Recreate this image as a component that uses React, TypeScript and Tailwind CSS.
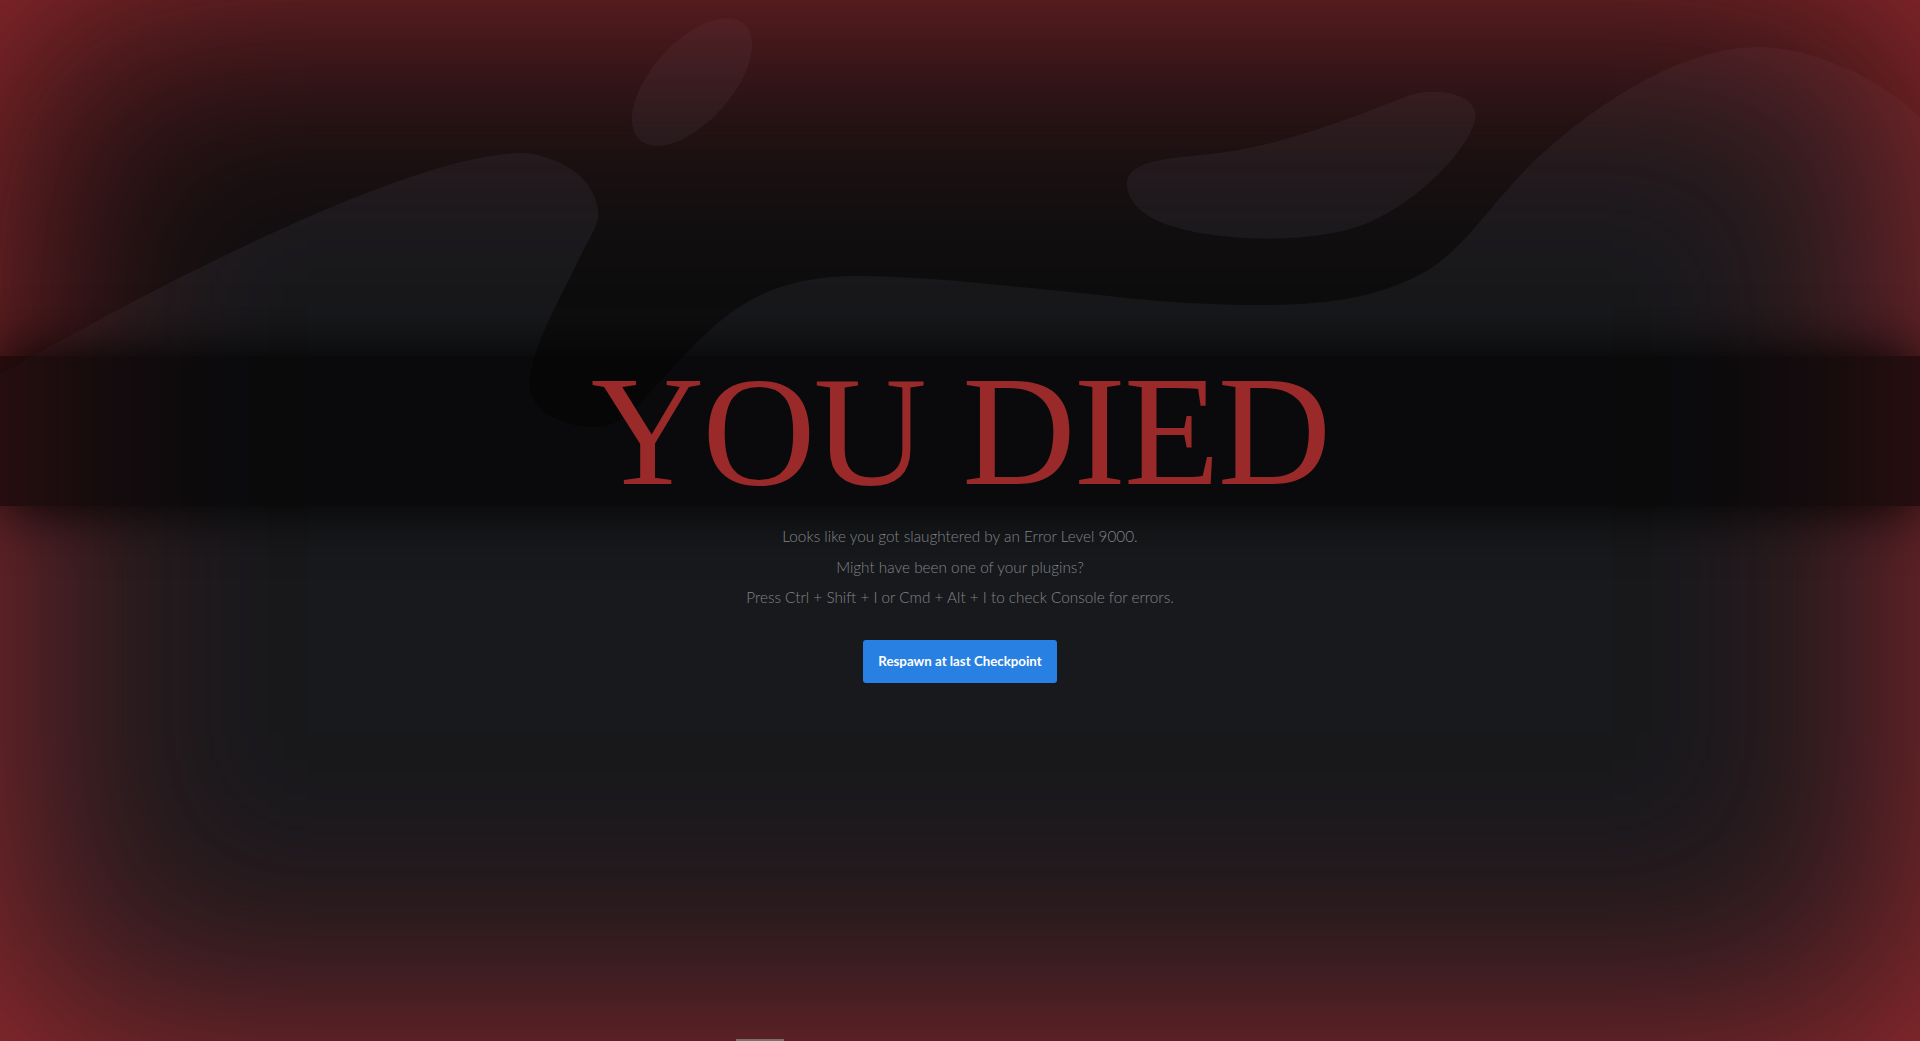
import React from 'react';

const messages = [
  'Looks like you got slaughtered by an Error Level 9000.',
  'Might have been one of your plugins?',
  'Press Ctrl + Shift + I or Cmd + Alt + I to check Console for errors.',
];

const Backdrop: React.FC = () => (
  <svg
    className="absolute inset-0 h-full w-full"
    viewBox="0 0 1920 1041"
    preserveAspectRatio="none"
  >
    <rect x="0" y="0" width="1920" height="1041" fill="#18191c" />
    {/* dark upper area, with the tongue dipping between the two big shapes */}
    <path
      fill="#0e0e0f"
      d="M0 0 H1920 V117
         C1870 70 1800 45 1753 47
         C1680 50 1600 100 1533 162
         C1490 205 1470 240 1433 267
         C1380 300 1320 306 1243 305
         C1190 304 1140 300 1100 295
         C1000 285 920 276 857 276
         C790 276 750 295 713 327
         C680 357 650 395 630 413
         C618 422 608 428 590 427
         C560 425 525 410 530 377
         C535 340 565 290 580 257
         C592 232 600 225 598 210
         C596 190 580 168 547 158
         C537 154 530 153 520 153
         C420 155 200 260 0 375 Z"
    />
    <ellipse cx="692" cy="82" rx="78" ry="40" fill="#18191c" transform="rotate(-48 692 82)" />
    <path
      fill="#18191c"
      d="M1127 187 C1125 165 1150 160 1200 155 C1280 148 1350 118 1410 95
         C1450 85 1480 100 1475 120 C1468 150 1420 200 1370 222
         C1320 245 1210 243 1160 222 C1140 213 1128 200 1127 187 Z"
    />
  </svg>
);

const App: React.FC = () => {
  return (
    <div className="relative h-[1041px] w-full overflow-hidden bg-[#18191c]">
      <Backdrop />
      <div className="absolute inset-0 shadow-[inset_0_0_300px_#9e2a2f]" />

      <div className="relative flex flex-col items-center pt-[356px]">
        <div className="flex h-[150px] w-full items-center justify-center bg-black/[0.57] shadow-[0_0_60px_#000]">
          <h1 className="font-['Liberation_Serif',serif] text-[157px] font-normal leading-none tracking-[-2px] text-[#9a2a2a]">
            YOU DIED
          </h1>
        </div>

        <div className="mt-[20px] flex flex-col items-center gap-[10.5px] font-['Lato',sans-serif] text-[15.3px] font-light leading-5 text-[#80848b]">
          {messages.map((line) => (
            <p key={line}>{line}</p>
          ))}
        </div>

        <button className="mt-[33px] h-[43px] w-[194px] rounded-[3px] bg-[#2880e3] font-['Lato',sans-serif] text-[13.3px] font-bold text-white">
          Respawn at last Checkpoint
        </button>
      </div>

      <div className="absolute bottom-0 left-[736px] h-[2px] w-[48px] bg-[#77706c]" />
    </div>
  );
};

export default App;
